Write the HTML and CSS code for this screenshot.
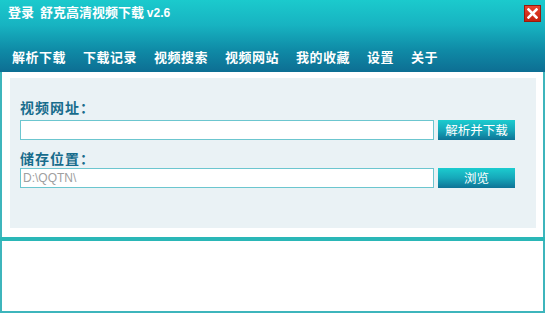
FILE: index.html
```html
<!DOCTYPE html>
<html lang="zh-CN">
<head>
  <meta charset="UTF-8">
  <title>舒克高清视频下载 v2.6</title>
  <link rel="stylesheet" href="styles.css">
</head>
<body>
  <div class="window">
    <div class="header">
      <div class="title-row">
        <span class="title">登录&nbsp;&nbsp;舒克高清视频下载 <span class="ver">v2.6</span></span>
        <div class="close-btn">
          <svg width="11" height="11" viewBox="0 0 11 11">
            <path d="M1.5 1.5 L9.5 9.5 M9.5 1.5 L1.5 9.5" stroke="#fff" stroke-width="2.6" stroke-linecap="square"/>
          </svg>
        </div>
      </div>
      <div class="nav">
        <span class="nav-item">解析下载</span>
        <span class="nav-item">下载记录</span>
        <span class="nav-item">视频搜索</span>
        <span class="nav-item">视频网站</span>
        <span class="nav-item">我的收藏</span>
        <span class="nav-item">设置</span>
        <span class="nav-item">关于</span>
      </div>
    </div>
    <div class="main">
      <div class="panel">
        <div class="field-label first">视频网址：</div>
        <div class="field-row">
          <div class="text-box"></div>
          <div class="btn">解析并下载</div>
        </div>
        <div class="field-label">储存位置：</div>
        <div class="field-row">
          <div class="text-box path">D:\QQTN\</div>
          <div class="btn">浏览</div>
        </div>
      </div>
    </div>
    <div class="divider"></div>
    <div class="log"></div>
  </div>
</body>
</html>
```

FILE: styles.css
```css
body {
  margin: 0;
  background: #fff;
  font-family: "Noto Sans CJK SC", "Liberation Sans", sans-serif;
}
.window {
  width: 545px;
  height: 313px;
  display: flex;
  flex-direction: column;
}
.header {
  height: 72px;
  background: linear-gradient(#1bcacd 0%, #17b3c1 35%, #0f8aa6 70%, #0d6e93 100%);
  color: #fff;
  display: flex;
  flex-direction: column;
}
.title-row {
  height: 27px;
  display: flex;
  align-items: center;
  justify-content: space-between;
  padding: 0 4px 0 8px;
}
.title {
  font-size: 13px;
  font-weight: bold;
  line-height: 18px;
  margin-top: -2px;
}
.ver {
  font-family: "Liberation Sans", sans-serif;
  font-size: 12px;
}
.close-btn {
  width: 17px;
  height: 17px;
  box-sizing: border-box;
  background: linear-gradient(#e8442e, #c4220f);
  border: 1px solid #9a1a0c;
  display: flex;
  align-items: center;
  justify-content: center;
  margin-top: 0;
}
.nav {
  display: flex;
  gap: 17px;
  padding: 21px 0 0 12px;
}
.nav-item {
  font-size: 13px;
  font-weight: bold;
  letter-spacing: 0.5px;
  line-height: 18px;
}
.main {
  flex: none;
  height: 165px;
  box-sizing: border-box;
  border-left: 2px solid #3db5bc;
  border-right: 2px solid #3db5bc;
  padding: 6px 7px 9px 8px;
}
.panel {
  height: 150px;
  box-sizing: border-box;
  background: #eaf2f5;
  padding: 19px 0 0 10px;
}
.field-label {
  font-size: 14px;
  font-weight: bold;
  letter-spacing: 1px;
  line-height: 20px;
  color: #176c8c;
  margin-top: 8px;
}
.field-label.first {
  margin-top: 0;
  margin-bottom: 3px;
}
.field-row {
  display: flex;
  gap: 4px;
}
.text-box {
  width: 414px;
  height: 20px;
  box-sizing: border-box;
  background: #fff;
  border: 1px solid #6cc6cf;
}
.text-box.path {
  font-family: "Liberation Sans", sans-serif;
  font-size: 12px;
  color: #a0a0a0;
  line-height: 18px;
  padding-left: 2px;
}
.btn {
  width: 77px;
  height: 20px;
  background: linear-gradient(#1ccccf 0%, #16a8ba 50%, #0e7396 100%);
  color: #fff;
  font-size: 12.5px;
  line-height: 20px;
  text-align: center;
}
.divider {
  height: 4px;
  background: #2ab7b7;
}
.log {
  flex: 1;
  border-left: 2px solid #3db5bc;
  border-right: 2px solid #3db5bc;
  border-bottom: 2px solid #3db5bc;
}
```
